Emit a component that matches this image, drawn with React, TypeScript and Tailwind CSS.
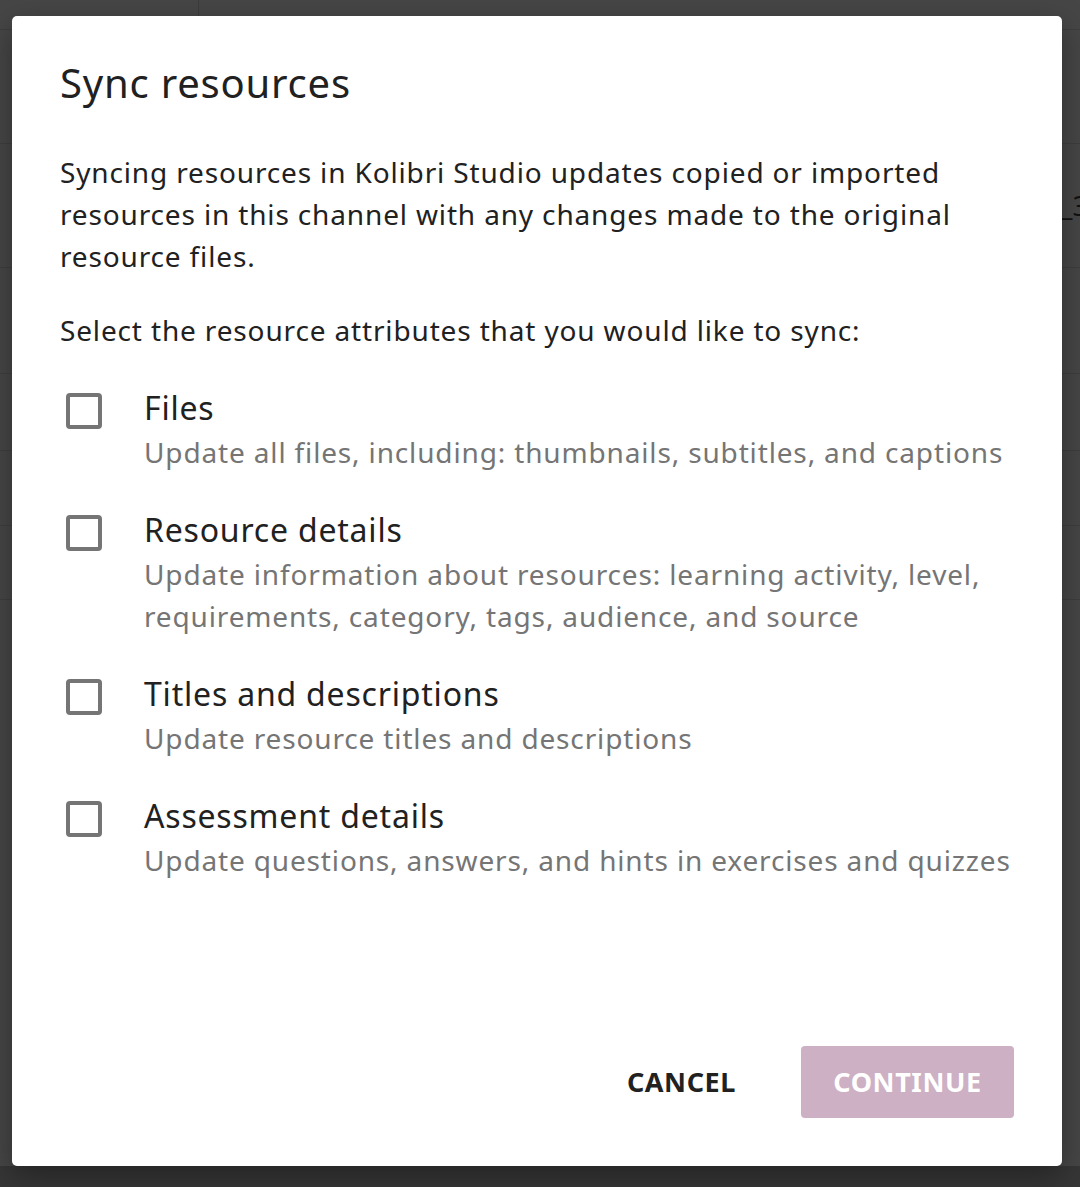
import React from "react";

type Option = {
  title: string;
  description: string;
};

const options: Option[] = [
  {
    title: "Files",
    description: "Update all files, including: thumbnails, subtitles, and captions",
  },
  {
    title: "Resource details",
    description:
      "Update information about resources: learning activity, level, requirements, category, tags, audience, and source",
  },
  {
    title: "Titles and descriptions",
    description: "Update resource titles and descriptions",
  },
  {
    title: "Assessment details",
    description: "Update questions, answers, and hints in exercises and quizzes",
  },
];

function Checkbox() {
  return (
    <span className="mt-[8px] block size-[36px] shrink-0 rounded-[4px] border-[4px] border-[#757575] bg-white" />
  );
}

export default function App() {
  return (
    <div
      className="relative h-[1187px] w-[1080px] overflow-hidden bg-[#464646]"
      style={{ fontFamily: '"Noto Sans", sans-serif' }}
    >
      {/* page behind the overlay */}
      <div className="absolute left-[198px] top-0 h-[16px] w-px bg-[#3c3c3c]" />
      <div className="absolute left-0 right-0 top-[29px] h-px bg-[#3e3e3e]" />
      <div className="absolute left-0 right-0 top-[143px] h-px bg-[#3e3e3e]" />
      <div className="absolute left-0 right-0 top-[267px] h-px bg-[#3e3e3e]" />
      <div className="absolute left-0 right-0 top-[373px] h-px bg-[#3e3e3e]" />
      <div className="absolute left-0 right-0 top-[450px] h-px bg-[#3e3e3e]" />
      <div className="absolute left-0 right-0 top-[525px] h-px bg-[#3e3e3e]" />
      <div className="absolute left-0 right-0 top-[599px] h-px bg-[#3e3e3e]" />
      <div className="absolute left-[1060px] top-[185px] text-[28px] leading-[40px] text-[#111]">_3</div>
      <div className="absolute bottom-0 left-0 right-0 h-[21px] bg-[#363636]" />

      <div className="absolute left-[12px] top-[16px] flex h-[1150px] w-[1050px] flex-col rounded-[5px] bg-white px-[48px] pb-[48px] pt-[42px] shadow-[0_10px_30px_rgba(0,0,0,0.35)]">
        <h1 className="text-[40px] font-normal leading-[50px] tracking-[0.8px] text-[#212121]">
          Sync resources
        </h1>

        <p className="mt-[43px] text-[28px] leading-[42px] tracking-[0.85px] text-[#212121]">
          Syncing resources in Kolibri Studio updates copied or imported resources in this channel
          with any changes made to the original resource files.
        </p>

        <p className="mt-[32px] text-[28px] leading-[42px] tracking-[0.85px] text-[#212121]">
          Select the resource attributes that you would like to sync:
        </p>

        <div className="mt-[34px] flex flex-col gap-[34px]">
          {options.map((option) => (
            <label key={option.title} className="flex items-start gap-[42px] pl-[6px]">
              <Checkbox />
              <span className="flex flex-col">
                <span className="text-[32px] leading-[46px] tracking-[0.8px] text-[#212121]">
                  {option.title}
                </span>
                <span className="text-[28px] leading-[42px] tracking-[0.85px] text-[#757575]">
                  {option.description}
                </span>
              </span>
            </label>
          ))}
        </div>

        <div className="mt-auto flex items-center justify-end gap-[41px]">
          <button
            type="button"
            className="px-[24px] text-[27px] font-bold uppercase leading-[72px] tracking-[0.6px] text-[#212121]"
          >
            Cancel
          </button>
          <button
            type="button"
            disabled
            className="h-[72px] w-[213px] rounded-[4px] bg-[#cdb0c4] text-[27px] font-bold uppercase tracking-[0.6px] text-white"
          >
            Continue
          </button>
        </div>
      </div>
    </div>
  );
}
